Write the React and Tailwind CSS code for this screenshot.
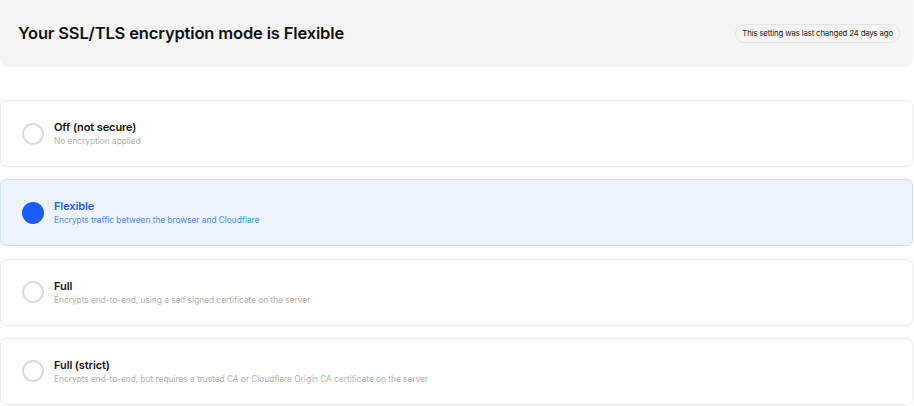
import React from "react";

const options = [
  { title: "Off (not secure)", desc: "No encryption applied", selected: false },
  { title: "Flexible", desc: "Encrypts traffic between the browser and Cloudflare", selected: true },
  { title: "Full", desc: "Encrypts end-to-end, using a self signed certificate on the server", selected: false },
  {
    title: "Full (strict)",
    desc: "Encrypts end-to-end, but requires a trusted CA or Cloudflare Origin CA certificate on the server",
    selected: false,
  },
];

export default function App() {
  return (
    <div
      className="w-[913px] h-[406px] bg-white overflow-hidden"
      style={{ fontFamily: "Inter, 'Noto Sans', sans-serif" }}
    >
      <div className="h-[67px] bg-[#f4f4f4] rounded-b-lg flex items-center justify-between pl-[18px] pr-[13px]">
        <h1 className="text-[16.5px] font-semibold text-[#111111] tracking-[-0.15px]">
          Your SSL/TLS encryption mode is Flexible
        </h1>
        <span className="h-[19px] px-[6px] flex items-center rounded-full border border-[#e4e4e4] bg-[#f6f6f6] text-[7.8px] tracking-[-0.15px] text-[#222222]">
          This setting was last changed 24 days ago
        </span>
      </div>
      <div className="mt-[33px] flex flex-col gap-[12.33px]">
        {options.map((o) => (
          <div
            key={o.title}
            className={
              o.selected
                ? "h-[67px] rounded-md border border-[#cfe1fd] bg-[#edf4ff] flex items-center pl-[21px] gap-[10px]"
                : "h-[67px] rounded-md border border-[#ececec] bg-white flex items-center pl-[21px] gap-[10px]"
            }
          >
            {o.selected ? (
              <div className="w-[22px] h-[22px] rounded-full bg-[#1c5cf7]" />
            ) : (
              <div className="w-[22px] h-[22px] rounded-full border-2 border-[#dddddd]" />
            )}
            <div className="flex flex-col">
              <div
                className={
                  o.selected
                    ? "text-[11px] leading-[15px] font-semibold tracking-[-0.1px] text-[#1f5ef5]"
                    : "text-[11px] leading-[15px] font-semibold tracking-[-0.1px] text-[#111111]"
                }
              >
                {o.title}
              </div>
              <div
                className={
                  o.selected
                    ? "text-[8.3px] leading-[12px] text-[#4a8af7]"
                    : "text-[8.3px] leading-[12px] text-[#b3b3b3]"
                }
              >
                {o.desc}
              </div>
            </div>
          </div>
        ))}
      </div>
    </div>
  );
}
